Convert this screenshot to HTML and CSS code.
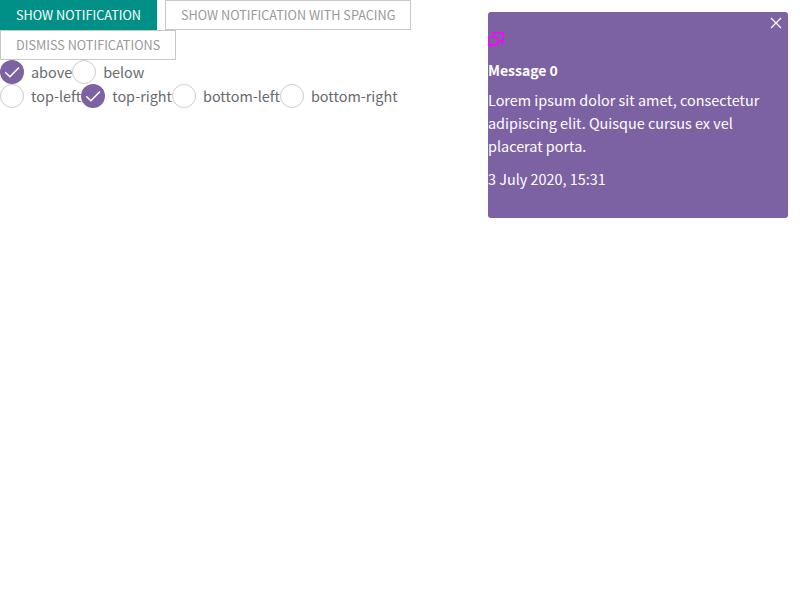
FILE: index.html
```html
<!DOCTYPE html>
<html lang="en">
<head>
<meta charset="utf-8">
<title>Notifications</title>
<link rel="stylesheet" href="styles.css">
</head>
<body>
<div class="actions">
  <button class="button primary">SHOW NOTIFICATION</button>
  <button class="button">SHOW NOTIFICATION WITH SPACING</button>
  <button class="button">DISMISS NOTIFICATIONS</button>
</div>
<div class="options">
  <label class="radio"><span class="dot checked"><svg viewBox="0 0 24 24"><path d="M5.2 12.2l4.7 4.5L19 7.4"/></svg></span>above</label>
  <label class="radio"><span class="dot"></span>below</label>
</div>
<div class="options">
  <label class="radio"><span class="dot"></span>top-left</label>
  <label class="radio"><span class="dot checked"><svg viewBox="0 0 24 24"><path d="M5.2 12.2l4.7 4.5L19 7.4"/></svg></span>top-right</label>
  <label class="radio"><span class="dot"></span>bottom-left</label>
  <label class="radio"><span class="dot"></span>bottom-right</label>
</div>
<section class="notification">
  <svg class="close" viewBox="0 0 12 12"><path d="M1 1l10 10M11 1L1 11"/></svg>
  <svg class="icon" viewBox="0 0 16 16"><path d="M5.600 5V.700H15.300V8.600H14.300V11L12 8.600H10M.700 5.400H9.800V12.700H4.200L2.200 14.700V12.700H.7Z"/></svg>
  <h2 class="title">Message 0</h2>
  <p class="text">Lorem ipsum dolor sit amet, consectetur adipiscing elit. Quisque cursus ex vel placerat porta.</p>
  <p class="time">3 July 2020, 15:31</p>
</section>
</body>
</html>
```
FILE: styles.css
```css
body {
  margin: 0;
  font: 14.42px/23px "Noto Sans CJK SC", sans-serif;
  color: #666a6d;
  background: #fff;
}
.actions {
  display: flex;
  flex-wrap: wrap;
  column-gap: 8px;
  width: 420px;
}
.button {
  box-sizing: border-box;
  height: 30px;
  padding: 0 15px;
  border: 1px solid #c8c8c8;
  background: #fff;
  color: #999;
  font: 12.67px/28px "Noto Sans CJK SC", sans-serif;
}
.primary {
  border-color: #009088;
  background: #009088;
  color: #fff;
}
.options {
  display: flex;
  height: 24px;
}
.radio {
  display: flex;
  line-height: 24px;
}
.dot {
  box-sizing: border-box;
  width: 24px;
  height: 24px;
  margin-right: 7px;
  border: 1px solid #ccc;
  border-radius: 50%;
  background: #fff;
}
.checked {
  border: 0;
  background: #7c62a2;
}
.checked svg {
  display: block;
  fill: none;
  stroke: #fff;
  stroke-width: 1.5;
}
.notification {
  position: absolute;
  top: 12px;
  right: 12px;
  box-sizing: border-box;
  width: 300px;
  height: 206px;
  padding-top: 20px;
  border-radius: 3px;
  background: #7c62a2;
  color: #fff;
}
.close {
  position: absolute;
  top: 5px;
  right: 6px;
  width: 12px;
  height: 12px;
  fill: none;
  stroke: #fff;
  stroke-width: 1.2;
}
.icon {
  display: block;
  width: 16px;
  height: 16px;
  fill: none;
  stroke: #f0f;
  stroke-width: 1.4;
}
.title {
  margin: 11px 0 6px;
  font-size: 14px;
  font-weight: 600;
}
.text {
  margin: 0 0 10px;
}
.time {
  margin: 0;
}
```
